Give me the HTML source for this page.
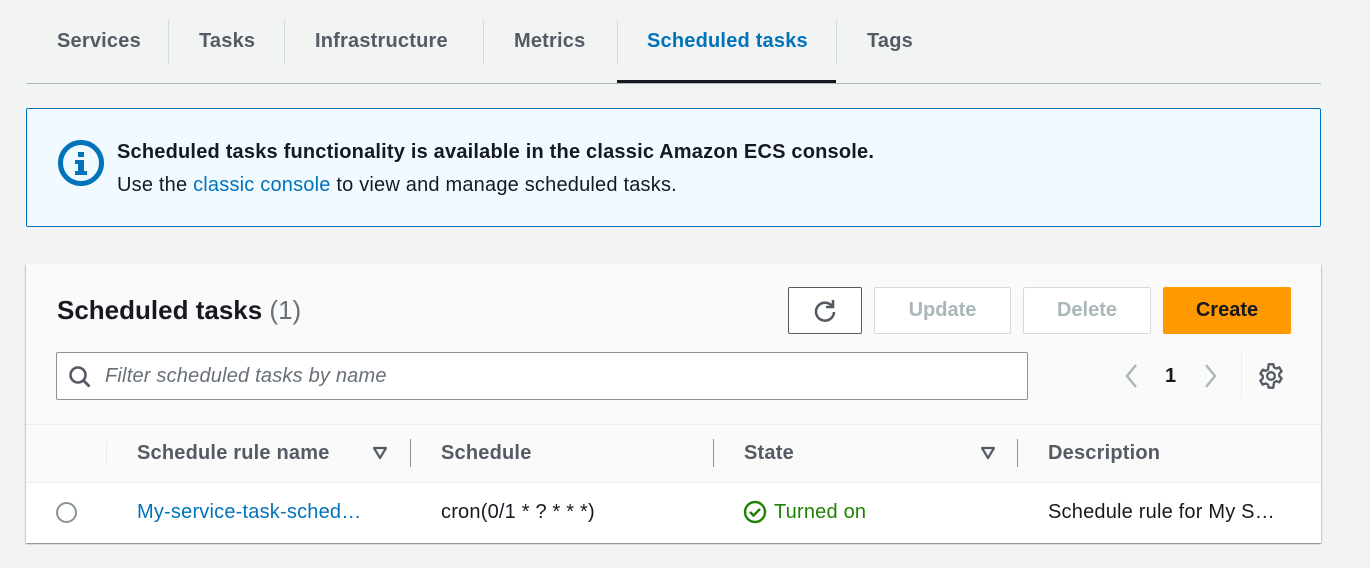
<!DOCTYPE html>
<html><head><style>
*{box-sizing:border-box;margin:0;padding:0}
body{width:1370px;height:568px;background:#f2f3f3;font-family:"Liberation Sans",sans-serif;position:relative;overflow:hidden;color:#16191f}
.a{position:absolute}
.tab{position:absolute;top:30px;font-size:20px;font-weight:bold;color:#545b64;letter-spacing:.2px}
.sep{position:absolute;top:20px;width:1px;height:44px;background:#d5dbdb}
.btn{position:absolute;top:287px;height:47px;border:1px solid #d5dbdb;background:#fff;border-radius:2px;font-weight:bold;font-size:20px;color:#aab7b8;display:flex;align-items:center;justify-content:center}
.th{position:absolute;top:442px;font-size:20px;font-weight:bold;color:#545b64;letter-spacing:.2px}
.vs{position:absolute;top:439px;width:1px;height:28px;background:#879596}
.t{font-size:20px;letter-spacing:.2px}
</style></head><body>
<div class="tab" style="left:57px">Services</div>
<div class="sep" style="left:168px"></div>
<div class="tab" style="left:199px">Tasks</div>
<div class="sep" style="left:284px"></div>
<div class="tab" style="left:315px">Infrastructure</div>
<div class="sep" style="left:483px"></div>
<div class="tab" style="left:514px">Metrics</div>
<div class="sep" style="left:617px"></div>
<div class="tab" style="left:647px;color:#0073bb">Scheduled tasks</div>
<div class="sep" style="left:836px"></div>
<div class="tab" style="left:867px">Tags</div>
<div class="a" style="left:26px;top:83px;width:1295px;height:1px;background:#aab7b8"></div>
<div class="a" style="left:617px;top:80px;width:219px;height:3px;background:#16191f"></div>

<div class="a" style="left:26px;top:108px;width:1295px;height:119px;background:#f1faff;border:1px solid #0073bb;border-radius:2px"></div>
<svg class="a" style="left:57px;top:139px" width="48" height="48" viewBox="0 0 48 48"><circle cx="24" cy="24" r="20.5" fill="none" stroke="#0073bb" stroke-width="5"/><rect x="21" y="13" width="6" height="5" fill="#0073bb"/><path d="M18 21h9v11h3v4H18v-4h3v-7h-3z" fill="#0073bb"/></svg>
<div class="a t" style="left:117px;top:141px;font-weight:bold">Scheduled tasks functionality is available in the classic Amazon ECS console.</div>
<div class="a t" style="left:117px;top:174px">Use the <span style="color:#0073bb">classic console</span> to view and manage scheduled tasks.</div>

<div class="a" style="left:26px;top:264px;width:1295px;height:279px;background:#fafafa;box-shadow:0 1px 1px rgba(0,28,36,.3),1px 1px 1px rgba(0,28,36,.15),-1px 1px 1px rgba(0,28,36,.15)"></div>
<div class="a" style="left:26px;top:482px;width:1295px;height:61px;background:#fff;border-top:1px solid #eaeded"></div>
<div class="a" style="left:26px;top:424px;width:1295px;height:1px;background:#eaeded"></div>
<div class="a" style="left:57px;top:295px;font-size:26px;font-weight:bold">Scheduled tasks <span style="font-weight:normal;color:#687078">(1)</span></div>
<div class="btn" style="left:788px;width:74px;border-color:#545b64"><svg width="26" height="26" viewBox="0 0 26 26"><path d="M20 8A9 9 0 1 0 22 14" fill="none" stroke="#545b64" stroke-width="2.6"/><path d="M21 2v7h-7" fill="none" stroke="#545b64" stroke-width="2.6"/></svg></div>
<div class="btn" style="left:874px;width:137px">Update</div>
<div class="btn" style="left:1023px;width:128px">Delete</div>
<div class="btn" style="left:1163px;width:128px;background:#ff9900;border-color:#ff9900;color:#16191f">Create</div>

<div class="a" style="left:56px;top:352px;width:972px;height:48px;background:#fff;border:1px solid #879596;border-radius:2px"></div>
<svg class="a" style="left:67px;top:364px" width="26" height="26" viewBox="0 0 26 26"><circle cx="11" cy="11" r="7.5" fill="none" stroke="#545b64" stroke-width="2.6"/><path d="M16.5 16.5l6 6" stroke="#545b64" stroke-width="2.8"/></svg>
<div class="a t" style="left:105px;top:365px;font-style:italic;color:#687078">Filter scheduled tasks by name</div>
<svg class="a" style="left:1120px;top:362px" width="22" height="28"><path d="M16 3L7 14l9 11" fill="none" stroke="#aab7b8" stroke-width="2.4"/></svg>
<div class="a" style="left:1165px;top:365px;font-size:20px;font-weight:bold">1</div>
<svg class="a" style="left:1200px;top:362px" width="22" height="28"><path d="M6 3l9 11-9 11" fill="none" stroke="#aab7b8" stroke-width="2.4"/></svg>
<div class="a" style="left:1241px;top:352px;width:1px;height:46px;background:#eaeded"></div>
<svg class="a" style="left:1257px;top:362px" width="28" height="28" viewBox="0 0 24 24"><circle cx="12" cy="12" r="3.3" fill="none" stroke="#545b64" stroke-width="2"/><path d="M10 2h4l.6 2.6 2 1 2.5-1 2 3.4-2 1.8v2.4l2 1.8-2 3.4-2.5-1-2 1L14 22h-4l-.6-2.6-2-1-2.5 1-2-3.4 2-1.8v-2.4l-2-1.8 2-3.4 2.5 1 2-1z" fill="none" stroke="#545b64" stroke-width="2" stroke-linejoin="round"/></svg>

<div class="a" style="left:106px;top:441px;width:1px;height:26px;background:#eaeded"></div>
<div class="th" style="left:137px">Schedule rule name</div>
<svg class="a" style="left:372px;top:446px" width="16" height="14"><path d="M2 2h12L8 12z" fill="none" stroke="#545b64" stroke-width="2.2" stroke-linejoin="round"/></svg>
<div class="vs" style="left:410px"></div>
<div class="th" style="left:441px">Schedule</div>
<div class="vs" style="left:713px"></div>
<div class="th" style="left:744px">State</div>
<svg class="a" style="left:980px;top:446px" width="16" height="14"><path d="M2 2h12L8 12z" fill="none" stroke="#545b64" stroke-width="2.2" stroke-linejoin="round"/></svg>
<div class="vs" style="left:1017px"></div>
<div class="th" style="left:1048px">Description</div>

<div class="a" style="left:56px;top:502px;width:21px;height:21px;border:2px solid #879596;border-radius:50%;background:#fff"></div>
<div class="a t" style="left:137px;top:501px;color:#0073bb">My-service-task-sched…</div>
<div class="a t" style="left:441px;top:501px">cron(0/1 * ? * * *)</div>
<svg class="a" style="left:743px;top:500px" width="24" height="24" viewBox="0 0 24 24"><circle cx="12" cy="12" r="10" fill="none" stroke="#1d8102" stroke-width="2.4"/><path d="M7 12l3.5 3.5L17 9" fill="none" stroke="#1d8102" stroke-width="2.4"/></svg>
<div class="a t" style="left:774px;top:501px;color:#1d8102">Turned on</div>
<div class="a t" style="left:1048px;top:501px">Schedule rule for My S…</div>
</body></html>
